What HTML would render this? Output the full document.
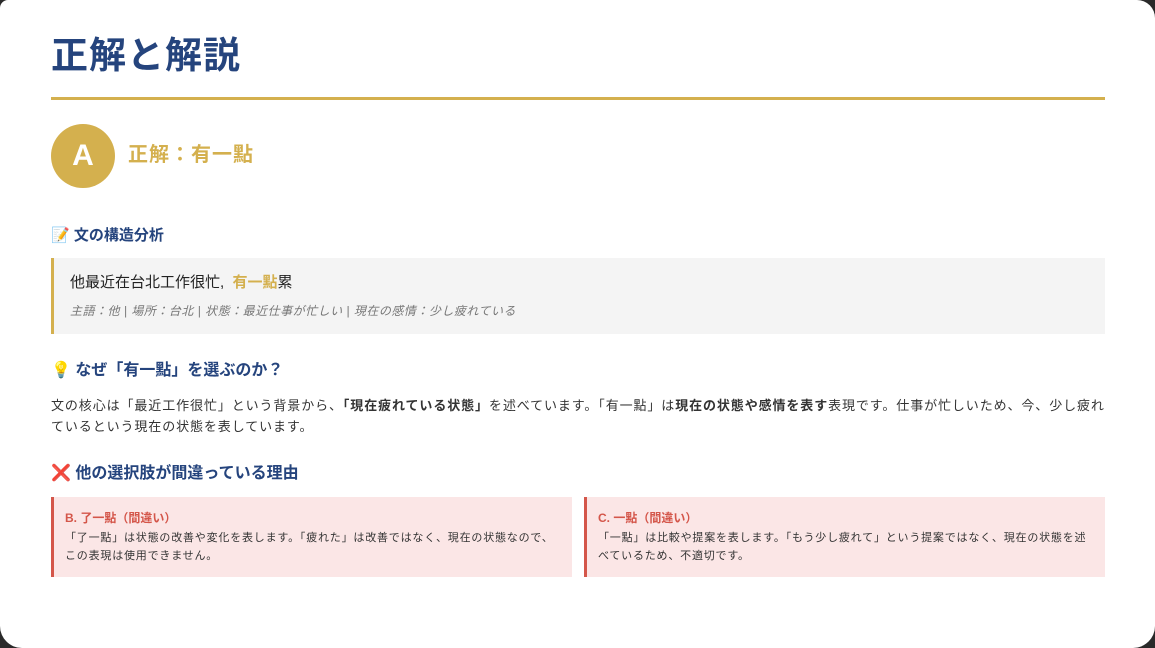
<!DOCTYPE html>
<html><head><meta charset="utf-8"><style>
html,body{margin:0;padding:0;}
body{width:1155px;height:648px;background:#2a2a2a;overflow:hidden;font-family:"Liberation Sans","Noto Sans CJK JP",sans-serif;}
.page{position:absolute;left:0;top:0;width:1155px;height:648px;background:#fff;border-radius:8px 18px 22px 22px;}
.a{position:absolute;}
h1{position:absolute;left:51px;top:32px;margin:0;font-size:37px;letter-spacing:1px;font-weight:bold;color:#25447d;line-height:48px;}
.line{left:51px;top:97px;width:1054px;height:3px;background:#d4b04e;}
.circ{left:51px;top:124px;width:64px;height:64px;border-radius:50%;background:#d4b04e;color:#fff;font-size:30px;font-weight:bold;text-align:center;line-height:64px;}
.ans{left:128px;top:141px;font-size:20px;letter-spacing:1px;font-weight:bold;color:#d4b04e;line-height:28px;}
.h{font-size:15px;font-weight:bold;color:#25447d;line-height:22px;}
.box{left:51px;top:258px;width:1051px;height:76px;background:#f4f4f4;border-left:3px solid #d4b04e;}
.p{font-size:13px;color:#333;line-height:21px;letter-spacing:0.9px;white-space:nowrap;}
.r{top:497px;height:80px;background:#fbe6e6;border-left:3px solid #d4564a;}
.rt{position:absolute;left:11px;top:12px;font-size:12px;font-weight:bold;color:#d4564a;}
.rb{position:absolute;left:11px;top:32px;font-size:11px;color:#333;line-height:18px;letter-spacing:0.8px;white-space:nowrap;}
</style></head><body><div class="page">
<h1>正解と解説</h1>
<div class="a line"></div>
<div class="a circ">A</div>
<div class="a ans">正解：有一點</div>
<div class="a h" style="left:51px;top:225px">📝 文の構造分析</div>
<div class="a box">
 <div class="a" style="left:16px;top:14px;font-size:15px;color:#222;line-height:22px">他最近在台北工作很忙,&nbsp; <b style="color:#d4b04e">有一點</b>累</div>
 <div class="a" style="left:16px;top:44px;font-size:12px;font-style:italic;color:#777;letter-spacing:0.5px;white-space:nowrap">主語：他 | 場所：台北 | 状態：最近仕事が忙しい | 現在の感情：少し疲れている</div>
</div>
<div class="a h" style="left:51px;top:360px;font-size:16px">💡 なぜ「有一點」を選ぶのか？</div>
<div class="a p" style="left:51px;top:395px">文の核心は「最近工作很忙」という背景から、<b>「現在疲れている状態」</b>を述べています。「有一點」は<b>現在の状態や感情を表す</b>表現です。仕事が忙しいため、今、少し疲れ<br>ているという現在の状態を表しています。</div>
<div class="a h" style="left:51px;top:463px;font-size:16px"><span style="color:#d33">❌</span> 他の選択肢が間違っている理由</div>
<div class="a r" style="left:51px;width:518px"><div class="rt">B. 了一點（間違い）</div><div class="rb">「了一點」は状態の改善や変化を表します。「疲れた」は改善ではなく、現在の状態なので、<br>この表現は使用できません。</div></div>
<div class="a r" style="left:584px;width:518px"><div class="rt">C. 一點（間違い）</div><div class="rb">「一點」は比較や提案を表します。「もう少し疲れて」という提案ではなく、現在の状態を述<br>べているため、不適切です。</div></div>
</div></body></html>
